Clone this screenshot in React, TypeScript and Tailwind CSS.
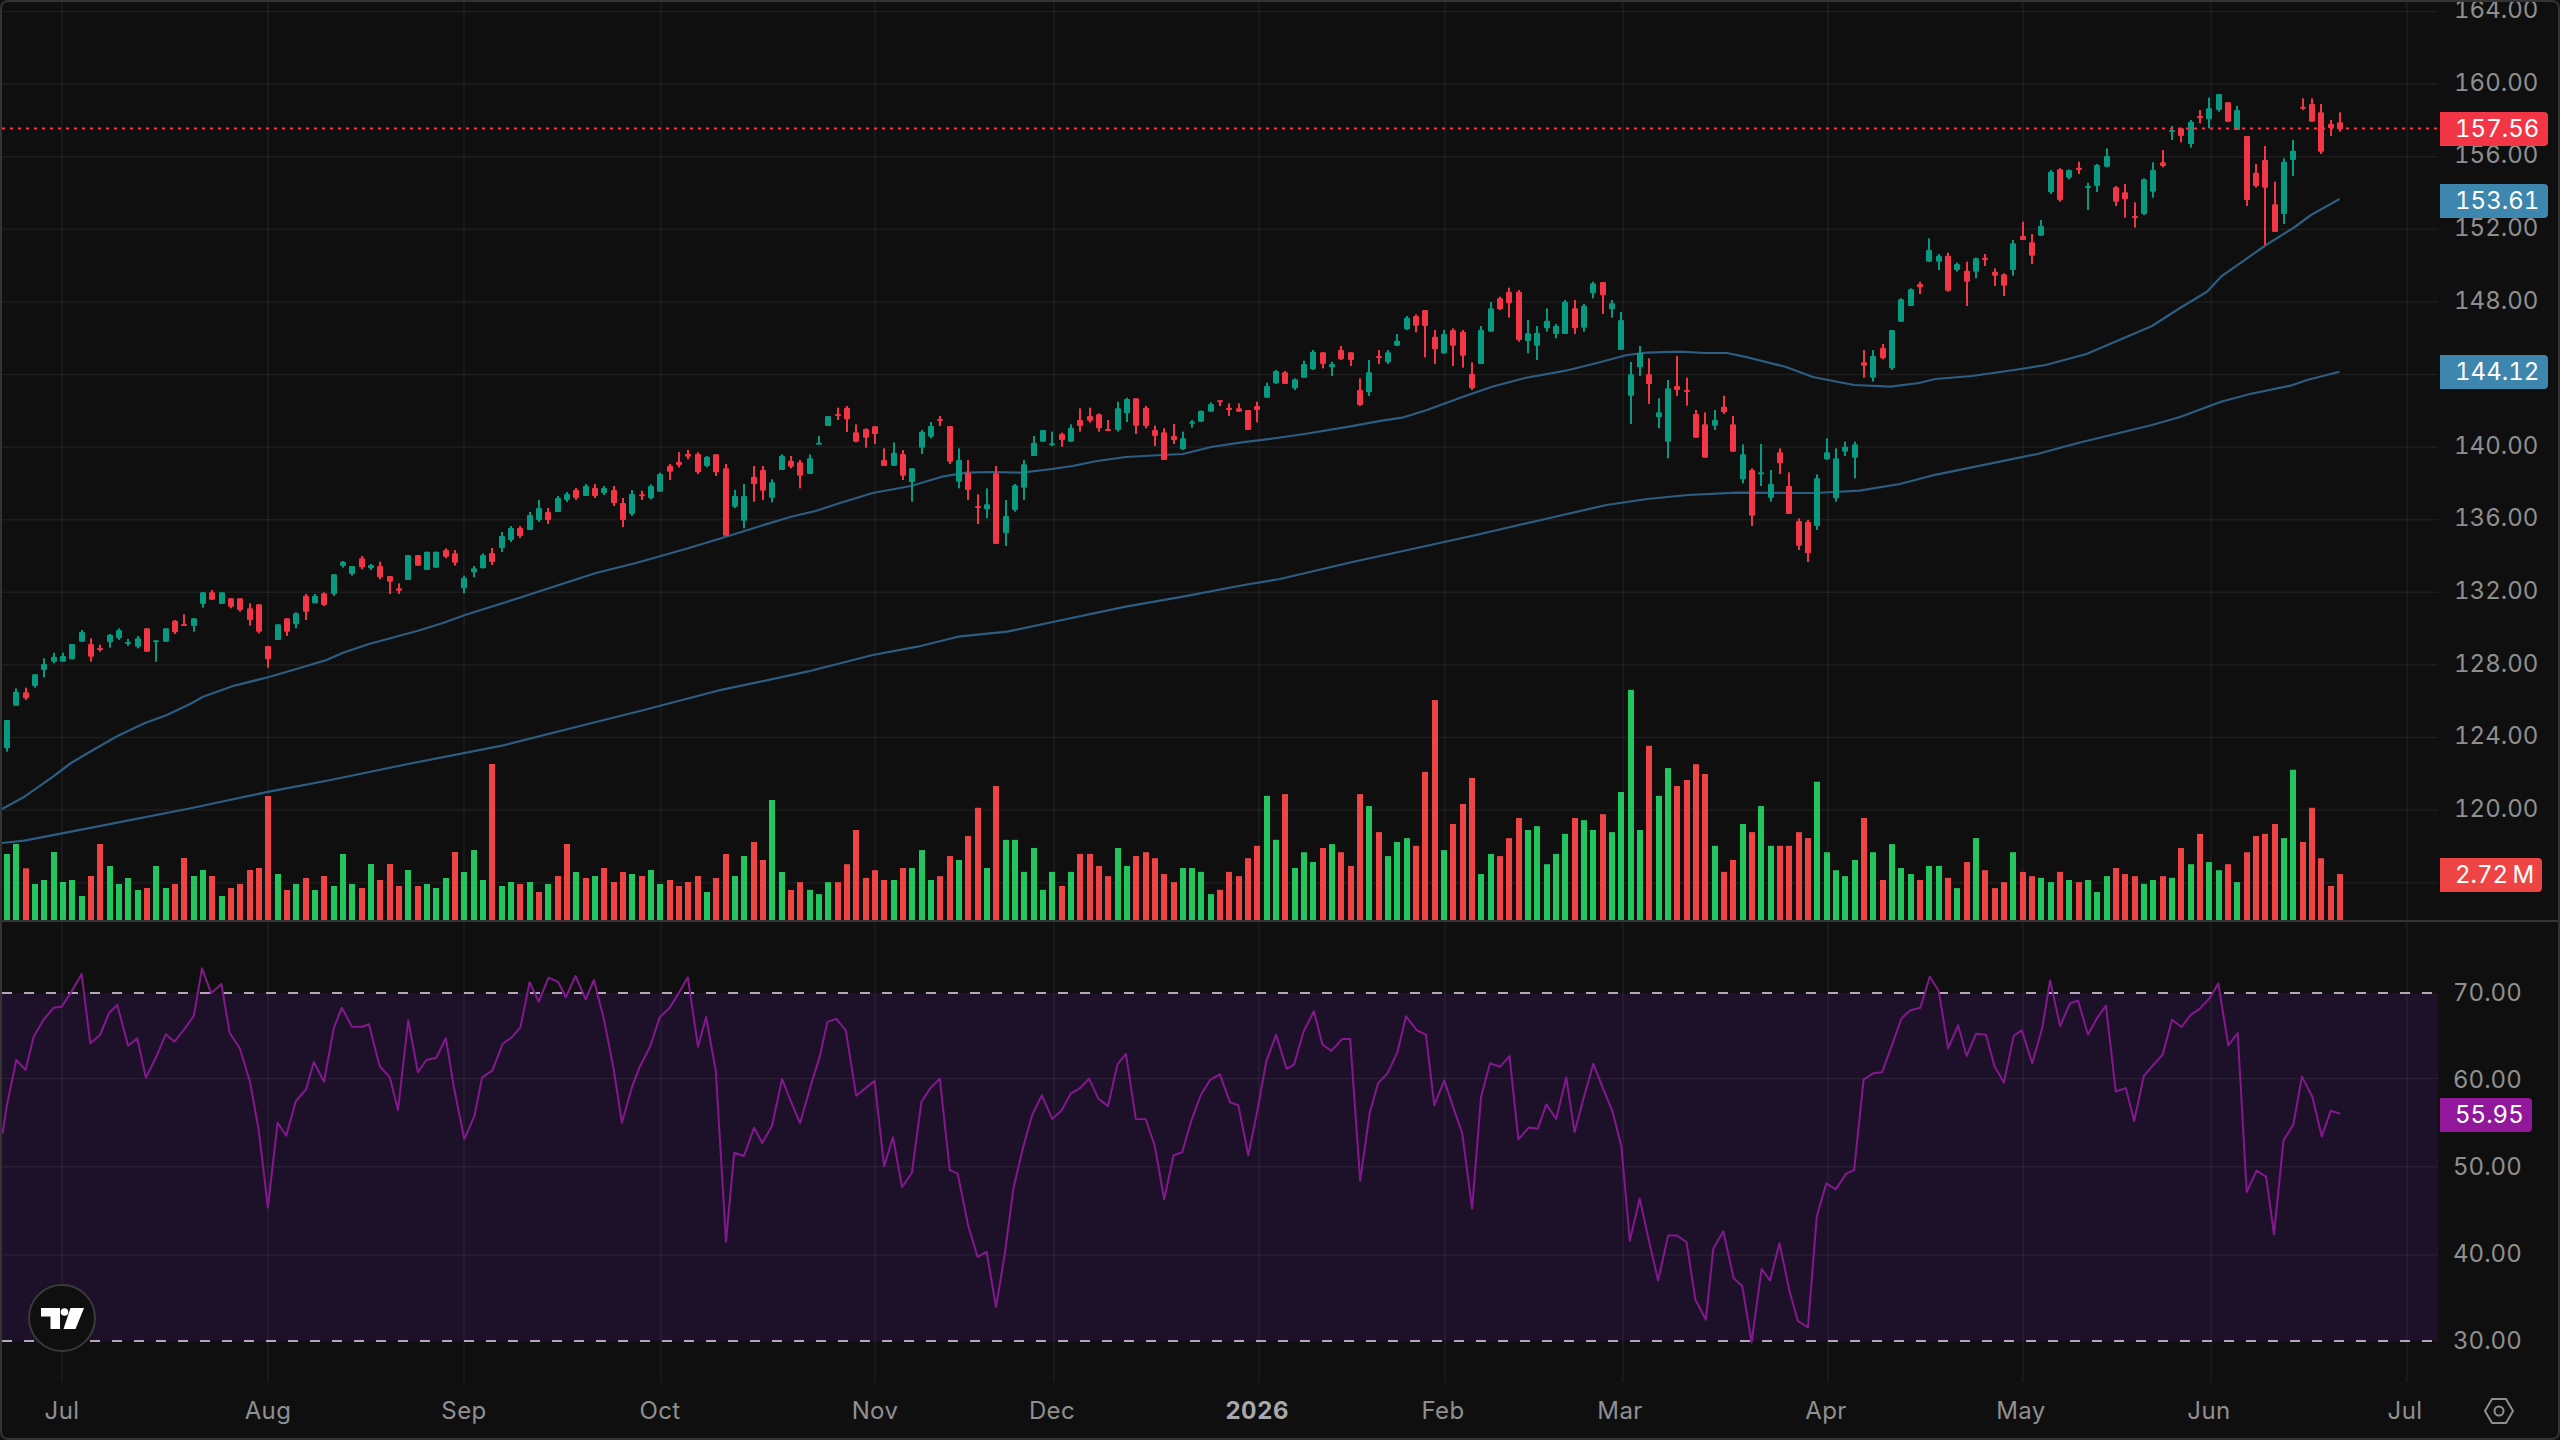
const FONT = "font-['Inter','Liberation_Sans',sans-serif]";

// [isGreen, bodyTop, bodyBottom, wickTop, wickBottom]
type C = [number, number, number, number, number];

const z5: C[] = [
[1,480,565,480,575],[1,395,437,385,437],[0,397,415,383,420],[1,343,378,343,383],[1,312,330,295,352],
[1,290,305,278,310],[1,288,305,278,305],[1,252,298,252,298],[1,216,245,210,245],[0,252,290,235,305],
[0,264,270,254,275],[1,224,247,222,263],[1,210,235,205,240],[1,246,252,237,258],[1,235,260,228,265],
[0,205,275,205,275],[1,241,244,241,305],[1,205,245,205,245],[0,182,217,180,222],[0,192,197,163,197],
[1,175,198,175,215],[1,97,132,97,143],[0,97,119,90,120],[1,97,132,97,132],[0,115,140,115,145],
[0,115,150,115,155],[0,145,180,130,197],[0,133,215,133,220],[0,258,298,258,323],[1,193,240,193,240],
[0,175,215,175,228],[1,160,193,157,205],[0,107,155,102,180],[1,107,130,102,130],[0,100,135,97,138],
[1,43,102,43,108],[1,5,18,3,23],[1,18,42,18,47],[0,-5,22,-12,28],[1,15,25,12,30],
[0,18,52,5,58],[0,48,65,48,102],[0,85,92,70,102],[1,-15,60,-15,60],[0,-15,17,-15,17],
[1,-25,30,-25,30],[1,-25,23,-25,23],[0,-30,-10,-35,-5],[0,-20,8,-30,17],[1,53,85,47,100],
[1,25,37,18,52],[1,-15,25,-20,25]];

const real: C[] = [
[0,553,562,548,565],[1,536,548,532,552],[1,528,540,526,542],[0,528,536,526,538],[1,515,530,512,530],
[1,508,520,500,522],[0,512,520,508,524],[1,498,512,496,512],[1,494,500,492,502],[0,490,498,488,500],
[1,486,496,484,496],[0,488,496,484,498],[1,488,493,486,495],[0,490,503,486,506],[0,503,520,498,527],
[1,494,514,490,516]];

const z6: C[] = [
[0,403,407,392,420],[1,378,415,373,418],[1,342,395,338,395],[0,317,335,312,360],[0,305,315,276,322],
[0,282,290,270,298],[0,282,337,277,342],[1,290,318,288,322],[0,283,337,283,348],[0,325,527,312,527],
[1,408,440,390,444],[1,408,482,372,505],[0,350,372,318,425],[0,330,392,318,420],[1,367,413,358,427],
[1,287,330,283,330],[0,302,320,288,325],[0,307,347,300,385],[1,295,342,283,342],[1,248,252,228,252],
[1,168,198,168,198],[0,162,168,143,180],[0,143,178,138,216],[0,217,245,193,247],[0,207,233,205,263],
[0,199,222,199,252],[0,300,318,265,318],[1,278,317,247,318],[0,282,347,270,360],[1,325,367,325,425],
[1,215,263,210,282],[1,198,230,186,235],[0,177,182,168,198],[0,198,305,198,312],[1,300,365,265,385],
[0,338,390,300,420],[0,438,442,403,492],[1,433,448,385,475],[0,340,552,318,552],[1,468,520,420,558],
[1,376,450,372,455],[1,313,383,300,420],[1,248,288,228,288],[1,210,245,210,245],[1,250,254,215,258],
[0,222,240,218,260],[1,203,245,193,245],[0,180,198,145,215],[0,168,182,143,188],[0,163,205,160,215],
[0,207,210,180,212],[1,145,210,125,215],[1,117,160,113,186],[0,115,197,115,222],[0,143,198,138,205],
[0,210,228,197,258],[0,217,300,205,300],[0,228,240,192,252],[1,235,268,215,270],[1,185,190,180,203],
[1,152,185,152,185],[1,132,155,127,155],[0,121,125,121,138],[0,143,150,130,168],[0,145,155,130,155],
[0,150,210,150,210],[0,138,150,125,187],[1,78,113,68,113],[1,33,70,30,72]];

const z7: C[] = [
[0,397,432,393,432],[1,418,445,415,450],[1,372,413,362,413],[1,335,388,330,390],[0,337,372,337,385],
[1,372,382,365,408],[0,330,358,318,360],[0,337,360,337,378],[0,450,495,415,498],[1,397,457,360,468],
[0,348,353,330,372],[1,337,367,330,372],[1,302,317,282,318],[1,233,268,228,270],[0,228,257,223,277],
[0,210,258,210,352],[0,290,328,270,372],[1,282,340,270,342],[0,270,317,265,378],[0,275,347,270,383],
[0,402,445,367,450],[1,270,372,258,372],[1,205,275,186,275],[0,175,208,170,210],[0,155,190,143,233],
[0,155,300,150,305],[1,280,303,240,340],[1,278,317,258,360],[1,242,265,205,275],[1,258,282,252,295],
[1,185,282,180,282],[0,205,265,180,282],[1,197,263,192,275],[1,130,160,125,175],[0,126,166,126,222],
[1,190,208,180,233],[1,240,330,216,330],[1,403,467,366,552],[1,338,382,318,408],[0,403,432,355,492],
[1,517,532,475,565],[1,445,605,420,655],[0,438,450,348,468],[0,450,455,413,497],[0,522,593,510,593],
[0,553,653,517,653],[1,540,557,510,570],[0,500,517,467,522],[0,553,635,528,635],[1,643,718,613,730],
[0,690,827,685,858],[1,697,702,612,738],[1,732,773,690,785],[0,637,670,625,702],[0,738,822,697,822],
[0,843,917,835,930],[0,845,940,840,966],[1,715,858,703,870],[1,637,658,595,660],[1,655,775,625,785],
[1,620,635,605,648],[1,613,653,605,715]];

const z8: C[] = [
[0,847,857,810,893],[1,828,893,810,905],[0,803,835,792,838],[1,750,865,750,870],[1,658,725,655,725],
[1,628,678,625,678],[0,612,622,605,642],[1,510,545,475,545],[1,527,545,522,570],[0,527,632,518,635],
[1,552,570,548,575],[0,572,605,545,678],[1,535,575,533,595],[0,533,540,522,558],[0,575,587,565,618],
[0,583,617,580,648],[1,490,570,480,587],[0,468,480,425,480],[0,487,527,462,552],[1,438,467,420,467],
[1,275,337,270,342],[0,268,360,265,365],[1,270,293,268,298],[0,263,270,245,282],[1,318,322,308,390],
[1,255,318,252,336],[1,228,260,205,262],[0,322,365,318,378],[0,337,358,312,413],[0,408,412,367,443],
[1,298,402,295,405],[1,270,335,247,353],[0,247,258,210,262],[1,150,155,138,180],[0,145,168,143,187],
[1,125,192,120,203],[0,108,115,90,130],[1,85,118,53,145],[1,42,90,42,95],[0,67,125,67,125],
[1,90,150,78,150],[0,168,360,168,378],[0,278,318,252,323],[0,240,323,198,495],[0,373,456,305,456],
[1,245,402,235,432],[1,212,240,180,288],[0,80,85,55,90],[0,72,125,55,125],[0,97,215,72,222],
[0,132,145,120,168],[0,127,148,97,155]];

const conv = (a: C[], off: number): C[] =>
  a.map(([g, b, c, d, e]) => [g, off + b / 3, off + c / 3, off + d / 3, off + e / 3] as C);

const candles: C[] = [...conv(z5, 560), ...real, ...conv(z6, 360), ...conv(z7, 240), ...conv(z8, 80)];

const volA = [522,492,-565,612,600,516,606,600,648,-588,-492,558,612,594,630,-624,558,624,-612,-534,588,570,-588,648,-624,-612,-570,-564,-348,582,-630,612,-594,630,-588,618,522,612,-624,552,-600,-552,-618,570,-618,612,624,594,-516,576,510,600,-252,618,606,-612,606,-636,612,-588,-492,576,-594,588,-564,-606,-576,582,-588,570,612,-600,-618,-606,-588,636,-594,-522,588,528,-486,-540,360,576,-630];
const volB = [-473,491,501,473,-473,-431,-351,-463,-445,-468,468,-440,440,398,468,-459,-412,421,-365,-299,440,-248,374,374,449,393,491,449,-482,449,-407,-407,-435,-459,393,435,-412,-403,-417,-454,-473,440,440,449,501,-491,-449,-459,-417,-388,271,374,-267,440,403,426,-393,384,-403,-435,-267,295,-356,412,379,370,-388,-215,-47,398,-337,-290,-229,454,407,-412,-370,-323,351,342,431,407,360,-323];
const volC = [328,351,-314,356,262,23,351,-154,271,206,-248,-234,-197,-220,388,-449,-421,337,-356,295,388,-388,-388,-356,-370,238,403,445,459,421,-323,403,-468,384,440,454,-468,435,435,-463,487,-426,370,-445,-487,-473,403,-449,-459,463,473,-449,468,-473,468,496,459,-440,-454,-459,477,468,-459,463,-393,431,-360,426,445,-431,473,-403,-365,-360,-337,370,210,-379,-299,-417,-482,-454];

const volumes = [
  ...volA.map((t) => ({ up: t > 0, top: 680 + Math.abs(t) / 3 })),
  ...volB.map((t) => ({ up: t > 0, top: 680 + Math.abs(t) / 2.34 })),
  ...volC.map((t) => ({ up: t > 0, top: 680 + Math.abs(t) / 2.34 })),
];

const ma50 = "2,809 24.5,796.7 53,776.7 71,763 90,751.7 118,735.7 145,723 167,715 192,703 203,696.7 233,686 269,677 304,666.7 326.5,660 343,652.7 369,644 418,630.7 443,623 465,615 522,597 565,583 596,573 637,562.7 689,548 726,536.7 758,526.7 791,516.7 815.5,511 840,503 872.7,493 911,486 942,476.7 966.5,472.7 991,472 1021.6,472.7 1052,469 1072.6,466 1097,461 1125.7,457 1162,455 1183,454 1211,447 1240,442.7 1280,437.5 1304.5,434 1349,426.7 1382,420.7 1402,417.7 1427,410 1459.6,398 1492,386.7 1525,378 1565.7,370.7 1598,362.7 1627,355 1647,352.7 1680,351.7 1704.5,353 1727,353 1749,357.7 1786,367 1813,377 1854,385 1890.6,386.7 1919,383 1935.5,379 1972,376 2021,369 2045.7,365 2086.5,354 2152,326 2180,308 2207,291.7 2221,276.7 2266,245 2294.7,227 2311,215 2339.6,199";
const ma200 = "2,843 24.5,840.7 102,825.7 192,808 269,791.7 330.6,780 408,764 502,745.7 592,723 640,711 717.6,690.7 807,671.7 872.7,655 917.6,646.7 958,636.7 1007,631.7 1048,623 1125.7,606.7 1183,596.7 1244,585 1280,579 1353.5,561.7 1394,553 1476,535 1541,520 1606.5,505 1647,499 1688,495 1737,492.7 1815,493 1859.6,490.7 1900,484 1931.4,475.7 2037.5,454 2078,443 2152,425 2180,417 2221,401.7 2250,394 2290.6,385.7 2307,380 2339.6,371.7";

const rsiA: [number, number][] = [[5,520],[13,440],[32,300],[50,330],[66,230],[85,180],[105,143],[121,140],[140,95],[160,42],[177,250],[196,225],[214,158],[230,135],[251,257],[269,235],[286,353],[305,295],[325,223],[342,245],[361,208],[380,167],[396,25],[414,100],[434,72],[450,218],[470,265],[490,365],[507,510],[525,743],[544,488],[561,527],[580,423],[600,388],[615,306],[635,365],[654,205],[670,143],[690,200],[710,200],[723,193],[744,318],[764,352],[780,450],[800,180],[819,337],[836,300],[855,293],[874,235],[890,385],[910,538],[930,467],[945,352],[965,332],[985,252],[1003,232],[1020,202],[1038,67],[1056,125],[1075,53],[1094,66],[1109,112],[1128,48],[1148,118],[1164,60],[1184,180],[1203,330],[1219,488],[1239,380],[1254,320],[1274,260],[1293,172],[1312,145],[1330,100],[1348,52],[1368,260],[1384,172],[1403,332],[1423,845],[1439,578],[1458,588],[1478,503],[1494,549],[1513,498],[1533,357],[1549,420]];
const rsiB: [number, number][] = [[0,1037],[24,940],[40,880],[55,800],[73,793],[92,820],[113,973],[150,938],[169,1138],[187,1070],[205,1187],[225,1153],[244,987],[262,955],[281,933],[301,1147],[317,1155],[338,1277],[357,1350],[375,1338],[394,1467],[412,1340],[429,1190],[448,1095],[467,1017],[486,972],[507,1027],[526,1007],[544,968],[563,955],[581,933],[600,980],[619,997],[638,900],[655,875],[675,1027],[695,1028],[713,1090],[732,1215],[751,1112],[768,1105],[787,1030],[806,970],[825,935],[844,923],[864,988],[881,995],[901,1112],[919,1010],[937,893],[957,830],[978,910],[993,900],[1012,823],[1033,775],[1050,853],[1068,868],[1090,840],[1106,840],[1126,1172],[1145,1013],[1162,943],[1181,920],[1201,870],[1218,787],[1240,820],[1258,830],[1275,995],[1295,937],[1313,1000],[1331,1060],[1351,1237],[1369,975],[1387,897],[1407,905],[1426,880],[1444,1075],[1465,1047],[1483,1050],[1500,993],[1520,1027],[1540,930],[1557,1058]];
const rsiC: [number, number][] = [[8,975],[27,898],[46,955],[65,1008],[83,1090],[100,1312],[120,1213],[138,1310],[157,1405],[177,1300],[195,1300],[214,1315],[232,1450],[253,1497],[268,1330],[288,1290],[309,1400],[326,1418],[345,1550],[365,1378],[382,1405],[401,1318],[421,1430],[438,1500],[458,1515],[476,1255],[495,1178],[514,1192],[535,1155],[551,1147],[570,935],[590,920],[607,918],[627,855],[646,792],[664,773],[684,767],[703,694],[721,728],[740,862],[760,808],[777,880],[796,828],[816,830],[833,903],[852,942],[872,832],[888,820],[909,897],[929,815],[945,703],[965,810],[985,757],[1001,750],[1021,830],[1040,790],[1057,762],[1077,963],[1097,955],[1114,1032],[1133,927],[1153,900],[1171,877],[1190,795],[1209,812],[1228,783],[1245,770],[1265,745],[1283,710],[1303,855],[1322,826],[1340,1198],[1360,1148],[1379,1162],[1395,1297],[1414,1077],[1434,1040],[1451,928],[1472,975],[1491,1068],[1509,1008],[1528,1015]];

const rsiPoints = [
  ...rsiA.map(([x, y]) => `${(x / 1.96).toFixed(1)},${(960 + y / 3).toFixed(1)}`),
  ...rsiB.map(([x, y]) => `${(800 + x / 2.01).toFixed(1)},${(680 + y / 2.34).toFixed(1)}`),
  ...rsiC.map(([x, y]) => `${(1580 + x / 2.01).toFixed(1)},${(680 + y / 2.34).toFixed(1)}`),
].join(" ");

const vGrid = [62, 268, 464, 661, 875, 1054, 1259, 1445, 1623, 1828, 2023, 2211, 2407];
const hGrid = Array.from({ length: 13 }, (_, k) => 11.5 + k * 72.6);
const priceLabels = ["164.00","160.00","156.00","152.00","148.00","144.00","140.00","136.00","132.00","128.00","124.00","120.00","116.00"];
const rsiLabels = ["70.00", "60.00", "50.00", "40.00", "30.00"];
const cx = (i: number) => Math.round(7 + i * 9.332);

const timeLabels = [
  { t: "Jul", c: "ml-0" },
  { t: "Aug", c: "ml-[86px]" },
  { t: "Sep", c: "ml-[76px]" },
  { t: "Oct", c: "ml-[76px]" },
  { t: "Nov", c: "ml-[95px]" },
  { t: "Dec", c: "ml-[57px]" },
  { t: "2026", c: "ml-[85px] font-bold text-[#a8a8a8]" },
  { t: "Feb", c: "ml-[66px]" },
  { t: "Mar", c: "ml-[57px]" },
  { t: "Apr", c: "ml-[86px]" },
  { t: "May", c: "ml-[75px]" },
  { t: "Jun", c: "ml-[68px]" },
  { t: "Jul", c: "ml-[76px]" },
];

function GridV({ y1, y2 }: { y1: number; y2: number }) {
  return (
    <>
      {vGrid.map((x) => (
        <line key={x} x1={x} x2={x} y1={y1} y2={y2} stroke="#ffffff" strokeOpacity={0.06} strokeWidth={1.5} />
      ))}
    </>
  );
}

function PriceChart() {
  return (
    <svg width={2436} height={918} viewBox="2 2 2436 918" className="block shrink-0">
      <GridV y1={2} y2={920} />
      {hGrid.map((y) => (
        <line key={y} x1={2} x2={2438} y1={y} y2={y} stroke="#ffffff" strokeOpacity={0.06} strokeWidth={1.5} />
      ))}
      {volumes.map((v, i) => (
        <rect key={i} x={cx(i) - 3} y={v.top} width={6} height={920 - v.top} fill={v.up ? "#22c55e" : "#ef4444"} />
      ))}
      <polyline points={ma200} fill="none" stroke="#2c5d82" strokeWidth={2.2} strokeLinejoin="round" />
      <polyline points={ma50} fill="none" stroke="#2c5d82" strokeWidth={2.2} strokeLinejoin="round" />
      {candles.map(([g, bt, bb, wt, wb], i) => {
        const col = g ? "#089981" : "#f23645";
        return (
          <g key={i} fill={col}>
            <rect x={cx(i) - 1} y={wt} width={2} height={Math.max(wb - wt, 1)} />
            <rect x={cx(i) - 3} y={bt} width={6} height={Math.max(bb - bt, 2)} rx={1} />
          </g>
        );
      })}
      <line x1={2} x2={2438} y1={128.5} y2={128.5} stroke="#f23645" strokeWidth={2} strokeDasharray="3 5" />
    </svg>
  );
}

function RsiChart() {
  return (
    <svg width={2436} height={462} viewBox="2 922 2436 462" className="block shrink-0">
      <rect x={2} y={993} width={2436} height={348} fill="#1d1029" />
      <GridV y1={922} y2={1382} />
      {[1078.5, 1166.7, 1255].map((y) => (
        <line key={y} x1={2} x2={2438} y1={y} y2={y} stroke="#ffffff" strokeOpacity={0.06} strokeWidth={1.5} />
      ))}
      {[993, 1341].map((y) => (
        <line key={y} x1={2} x2={2438} y1={y} y2={y} stroke="#b3a6ba" strokeWidth={2} strokeDasharray="10 12" />
      ))}
      <polyline points={rsiPoints} fill="none" stroke="#85188f" strokeWidth={2} strokeLinejoin="round" />
    </svg>
  );
}

function Tag({ text, className }: { text: string; className: string }) {
  return (
    <div className={`absolute left-[2px] h-[34px] flex items-center pl-[15px] rounded-r-[4px] text-white ${className}`}>
      {text}
    </div>
  );
}

export default function App() {
  return (
    <div className="w-[2560px] h-[1440px] bg-[#0f0f0f]">
      <div className={`w-full h-full flex flex-col border-2 border-[#333333] rounded-[8px] overflow-hidden bg-[#0f0f0f] text-[24px] tabular-nums leading-none text-[#8f8f8f] ${FONT}`}>
        {/* price + volume pane */}
        <div className="flex h-[918px] shrink-0">
          <PriceChart />
          <div className="relative flex-1 overflow-hidden">
            <div className="flex flex-col -mt-[28px] pl-[16px]">
              {priceLabels.map((p) => (
                <div key={p} className="h-[72.6px] shrink-0 flex items-center">{p}</div>
              ))}
            </div>
            <Tag text="157.56" className="top-[110px] w-[108px] bg-[#f23645]" />
            <Tag text="153.61" className="top-[182px] w-[108px] bg-[#3d86ae]" />
            <Tag text="144.12" className="top-[353px] w-[108px] bg-[#3d86ae]" />
            <Tag text={"2.72\u2009M"} className="top-[856px] w-[102px] bg-[#ef4444]" />
          </div>
        </div>
        {/* pane separator */}
        <div className="h-[2px] shrink-0 bg-[#333333]" />
        {/* RSI pane */}
        <div className="relative flex h-[462px] shrink-0">
          <RsiChart />
          <div className="relative flex-1">
            <div className="flex flex-col pt-[27px] pl-[15px]">
              {rsiLabels.map((p) => (
                <div key={p} className="h-[87px] shrink-0 flex items-center">{p}</div>
              ))}
            </div>
            <Tag text="55.95" className="top-[176px] w-[92px] bg-[#93179b]" />
          </div>
          {/* logo badge */}
          <div className="absolute left-[26px] top-[362px] w-[68px] h-[68px] rounded-full bg-[#0f0f0f] border-2 border-[#3a3a3a] flex items-center justify-center">
            <svg width={43} height={21} viewBox="0 0 43 21" fill="#ffffff">
              <path d="M0 0H19V21H9.5V8.5H0Z" />
              <circle cx={23.5} cy={4} r={3.8} />
              <path d="M29.5 0H43L34.5 21H22.5Z" />
            </svg>
          </div>
        </div>
        {/* time axis */}
        <div className="flex-1 flex items-center">
          {timeLabels.map((l, i) => (
            <div key={i} className={`w-[120px] shrink-0 text-center tracking-[0.4px] ${l.c}`}>{l.t}</div>
          ))}
          <svg width={32} height={28} viewBox="0 0 32 28" fill="none" stroke="#8f8f8f" strokeWidth={2} className="ml-[18px] shrink-0">
            <path d="M9 2H23L30 14L23 26H9L2 14Z" strokeLinejoin="round" />
            <circle cx={16} cy={14} r={4.5} />
          </svg>
        </div>
      </div>
    </div>
  );
}
